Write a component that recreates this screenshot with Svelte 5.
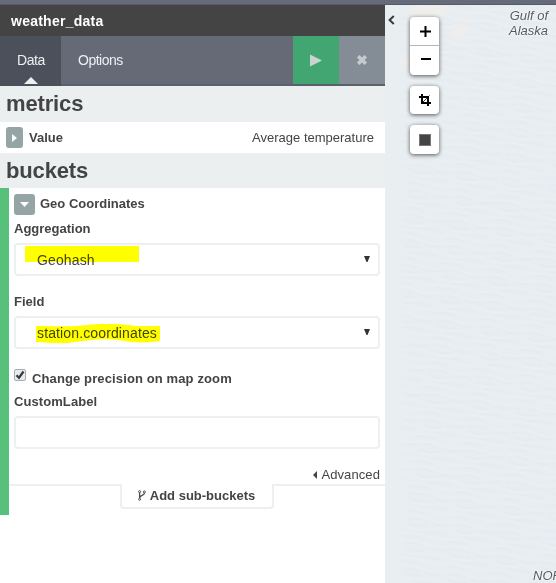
<script>
  let precision = $state(true);
  const fields = [
    { label: 'Aggregation', value: 'Geohash' },
    { label: 'Field', value: 'station.coordinates' }
  ];
</script>

<div class="app">
  <div class="topbar"></div>
  <div class="main">
    <aside>
      <div class="title">weather_data</div>
      <nav>
        <div class="tab active">Data<i></i></div>
        <div class="tab options">Options</div>
        <button class="apply" aria-label="Apply changes">
          <svg width="12" height="13" viewBox="0 0 12 13"><path d="M0 .5 12 6.5 0 12.5Z" fill="#c9d4cf" /></svg>
        </button>
        <button class="discard" aria-label="Discard changes">
          <svg width="12" height="12" viewBox="0 0 12 12"><path d="M2.2 2.2 9.8 9.8M9.8 2.2 2.2 9.8" stroke="#c6cbd0" stroke-width="3.6" /></svg>
        </button>
      </nav>
      <h2 class="metrics">metrics</h2>
      <div class="metric">
        <span class="toggle small"><svg width="5" height="8" viewBox="0 0 5 8"><path d="M0 0 5 4 0 8Z" fill="#fff" /></svg></span>
        <b>Value</b>
        <span class="desc">Average temperature</span>
      </div>
      <h2 class="buckets">buckets</h2>
      <section>
        <div class="bar"></div>
        <div class="content">
          <div class="bucket-head">
            <span class="toggle"><svg width="9" height="5" viewBox="0 0 9 5"><path d="M0 0H9L4.5 5Z" fill="#fff" /></svg></span>
            <b>Geo Coordinates</b>
          </div>
          {#each fields as field, i}
            <div class="label" class:second={i === 1}>{field.label}</div>
            <div class="box">
              {#if i === 0}
                <span class="marker"></span>
              {:else}
                <svg class="stroke" width="125" height="20" viewBox="0 0 125 20"><path d="M0 2C18 2 38 3 51 1C68-1 88 0 99 2L124 2V17C114 19 96 19 83 16C65 14 47 17 32 19C20 20 10 18 0 18Z" fill="#ff0" /></svg>
              {/if}
              <span class="value">{field.value}</span>
              <svg class="caret" width="6" height="6" viewBox="0 0 6 6"><path d="M0 0H6L3.5 6h-1Z" fill="#333" /></svg>
            </div>
          {/each}
          <label class="check">
            <input type="checkbox" bind:checked={precision} />
            <span class="tick">
              {#if precision}<svg width="10" height="10" viewBox="0 0 10 10"><path d="M1.5 5.2 4 7.7 8.5 1.5" fill="none" stroke="#363b42" stroke-width="2.2" /></svg>{/if}
            </span>
            <b>Change precision on map zoom</b>
          </label>
          <div class="label custom">CustomLabel</div>
          <div class="box"></div>
          <div class="advanced">
            <svg width="4" height="8" viewBox="0 0 4 8"><path d="M4 0 0 4 4 8Z" fill="#444" /></svg>
            Advanced
          </div>
          <div class="subrow">
            <span class="rule left"></span>
            <button class="sub">
              <svg width="8" height="11" viewBox="0 0 8 11"><g fill="none" stroke="#4d4d4d"><circle cx="1.6" cy="1.6" r="1" /><circle cx="1.6" cy="9.3" r="1" /><circle cx="6.4" cy="1.9" r="1" /><path d="M1.6 2.6V8.3M6.4 3C6.4 5.8 1.9 5 1.7 7.8" stroke-width="1.3" /></g></svg>
              <b>Add sub-buckets</b>
            </button>
            <span class="rule right"></span>
          </div>
        </div>
      </section>
    </aside>
    <div class="map">
      <svg class="terrain" width="171" height="578" viewBox="0 0 171 578">
        <defs>
          <linearGradient id="edge"><stop offset="0" stop-color="#e9eef0" /><stop offset=".6" stop-color="#e9eef0" /><stop offset="1" stop-color="#e9eef0" stop-opacity="0" /></linearGradient>
          <pattern id="waves" width="46" height="25" patternUnits="userSpaceOnUse" patternTransform="rotate(8)">
            <g fill="none" stroke-width="1.2">
              <path d="M0 3Q11 0 23 3T46 3M0 13Q12 16 23 13T46 13M0 20Q10 18 23 20T46 20" stroke="#ebf0f3" />
              <path d="M2 6Q11 3 21 6M27 7Q36 9 43 6M4 10Q12 13 23 10M14 17Q30 15 41 17M0 23Q10 21 19 23" stroke="#e3eaee" />
            </g>
          </pattern>
          <filter id="soft"><feGaussianBlur stdDeviation="3" /></filter>
        </defs>
        <rect width="171" height="578" fill="#e7edf1" />
        <rect width="171" height="578" fill="url(#waves)" />
        <g filter="url(#soft)" fill="#f0eeea"><path d="M18 8 34 0H66L58 10 40 14Z" /><path d="M66 24 82 17 83 29 70 36Z" /><path d="M13 55 24 49 23 68 16 63Z" /></g>
        <circle cx="15" cy="57" r="2" fill="#f9faf8" />
        <rect width="22" height="578" fill="url(#edge)" />
      </svg>
      <svg class="collapse" width="7" height="10" viewBox="0 0 7 10"><path d="M5.8 1 1.6 5 5.8 9" fill="none" stroke="#3b3b3b" stroke-width="2" /></svg>
      <div class="controls">
        <div class="group">
          <button class="in" aria-label="Zoom in"><svg width="11" height="11" viewBox="0 0 11 11"><path d="M0 5.5H11M5.5 0V11" stroke="#000" stroke-width="2" /></svg></button>
          <button class="out" aria-label="Zoom out"><svg width="10" height="2" viewBox="0 0 10 2"><path d="M0 1H10" stroke="#000" stroke-width="2" /></svg></button>
        </div>
        <div class="group one"><button aria-label="Fit bounds"><svg width="12" height="12" viewBox="0 0 12 12"><path d="M0 3H9V12M3 0V9H12" fill="none" stroke="#000" stroke-width="2" /><path d="M3.5 8.5 10.5 1.5" stroke="#000" stroke-width=".8" /></svg></button></div>
        <div class="group one draw"><button aria-label="Draw rectangle"><span class="square"></span></button></div>
      </div>
      <div class="place gulf"><span>Gulf of</span><span>Alaska</span></div>
      <div class="place nor">NOR</div>
    </div>
  </div>
</div>

<style>
  :global(body) { margin: 0; overflow: hidden; }
  * { box-sizing: border-box; }
  svg { display: block; flex: none; }
  button { border: 0; padding: 0; font: inherit; color: inherit; display: flex; align-items: center; justify-content: center; }
  .app { width: 556px; height: 583px; overflow: hidden; background: #fff; font: 13px/18px "Liberation Sans", Arial, sans-serif; color: #444; }
  .topbar { height: 5px; background: linear-gradient(#656b78 0 4px, #555c65 4px); }
  .main { display: flex; height: 578px; }
  aside { width: 385px; flex: none; }
  .title { height: 31px; padding-left: 11px; background: #444; color: #fff; font-weight: bold; font-size: 14px; line-height: 32px; letter-spacing: .25px; }
  nav { display: flex; height: 50px; background: #656a76; border-bottom: 2px solid #5b616c; color: #eceff3; font-size: 14px; line-height: 49px; }
  .tab { height: 48px; }
  .active { width: 61px; padding-left: 17px; background: #4b505b; position: relative; letter-spacing: -.4px; height: 50px; }
  .active i { position: absolute; left: 24px; bottom: 2px; border: 7px solid transparent; border-top: 0; border-bottom: 7px solid #ecf0f1; }
  .options { flex: 1; padding-left: 17px; letter-spacing: -.5px; }
  .apply { width: 46px; height: 48px; background: #42a672; padding-right: 1px; }
  .discard { width: 46px; height: 48px; background: #848d95; }
  h2 { margin: 0; padding-left: 6px; background: #ebeff0; font-size: 22px; letter-spacing: -.15px; }
  .metrics { height: 36px; line-height: 35px; }
  .buckets { height: 35px; line-height: 35px; }
  .metric { display: flex; align-items: center; height: 31px; padding: 0 11px 0 6px; }
  .metric b { margin-left: 6px; }
  .desc { margin-left: auto; }
  .toggle { width: 21px; height: 21px; border-radius: 3px; background: #95a5a6; display: flex; align-items: center; justify-content: center; }
  .small { width: 17px; }
  section { display: flex; height: 327px; }
  .bar { width: 9px; background: #57c17b; }
  .content { flex: 1; }
  .bucket-head { display: flex; height: 21px; margin: 6px 0 0 5px; gap: 5px; align-items: center; }
  .bucket-head b { position: relative; top: -1px; }
  .label { margin-left: 5px; height: 18px; margin-top: 5px; margin-bottom: 5px; font-weight: bold; }
  .second { margin-top: 17px; }
  .box { display: flex; align-items: center; position: relative; margin-left: 5px; width: 366px; height: 33px; border: 2px solid #ecf0f1; border-radius: 4px; padding: 0 8px 2px 21px; }
  .marker { position: absolute; left: 9px; top: 1px; width: 114px; height: 16px; background: #ff0; }
  .stroke { position: absolute; left: 20px; top: 6px; }
  .value { position: relative; top: 1px; font-size: 14px; letter-spacing: .13px; mix-blend-mode: multiply; }
  .caret { margin-left: auto; }
  .check { display: flex; height: 18px; margin: 21px 0 0 5px; }
  .check input { position: absolute; opacity: 0; pointer-events: none; }
  .check b { margin-left: 6px; letter-spacing: .12px; }
  .tick { width: 12px; height: 12px; margin-top: -1px; border: 1px solid #a9adb0; border-radius: 2px; background: #e9eaeb; }
  .custom { margin-bottom: 5px; letter-spacing: .08px; }
  .advanced { display: flex; justify-content: flex-end; align-items: center; gap: 4px; height: 18px; margin-top: 17px; padding-right: 5px; letter-spacing: .1px; }
  .subrow { display: flex; align-items: flex-start; height: 26px; }
  .rule { height: 2px; background: #ecf0f1; }
  .left { width: 111px; }
  .right { flex: 1; }
  .sub { width: 154px; height: 25px; gap: 4px; background: #fff; border: 2px solid #ecf0f1; border-top: 0; border-radius: 0 0 4px 4px; padding-right: 1px; }
  .map { width: 171px; position: relative; overflow: hidden; }
  .terrain { position: absolute; inset: 0; }
  .collapse { position: absolute; left: 3px; top: 10px; }
  .controls { position: absolute; left: 25px; top: 12px; display: flex; flex-direction: column; gap: 11px; }
  .group { width: 29px; height: 58px; border-radius: 4px; background: #fff; box-shadow: 0 1px 4px rgba(0, 0, 0, .65); }
  .group button { width: 29px; background: none; padding-left: 2px; }
  .group .in { height: 28px; }
  .group .out { height: 30px; border-top: 1px solid #b3b6b8; padding-bottom: 3px; }
  .one { height: 28px; }
  .group.one button { height: 100%; padding-left: 0; }
  .draw { height: 29px; }
  .square { width: 12px; height: 12px; margin: 1px 0 0 1px; background: #444; border: 1px solid #777; }
  .place { position: absolute; color: #555b61; font: italic 13px/15px "Liberation Sans", Arial, sans-serif; text-shadow: 0 0 2px #fff, 0 0 2px #fff; }
  .gulf { right: 8px; top: 3px; display: flex; flex-direction: column; align-items: flex-end; }
  .nor { left: 148px; top: 563px; }
</style>
